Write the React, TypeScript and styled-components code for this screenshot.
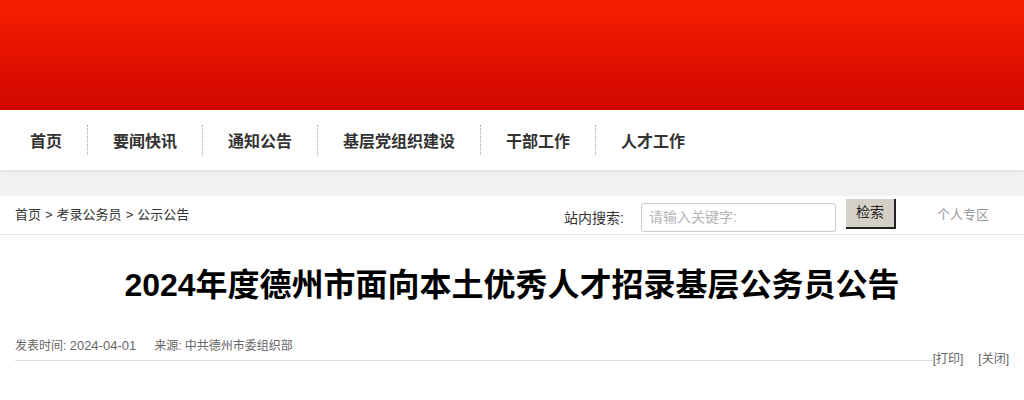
import React from 'react';
import styled, { createGlobalStyle } from 'styled-components';

const GlobalStyle = createGlobalStyle`
  body {
    margin: 0;
    background: #fff;
    font-family: "Liberation Sans", "Noto Sans CJK SC", sans-serif;
    color: #333;
  }
`;

const Banner = styled.div`
  height: 110px;
  background: linear-gradient(180deg, #f71f00 0%, #e51200 50%, #d00700 100%);
`;

const NavBar = styled.nav`
  height: 60px;
  background: #fff;
  display: flex;
  align-items: center;
  padding-left: 5px;
  box-shadow: 0 2px 4px rgba(0, 0, 0, 0.08);
  position: relative;
`;

const NavItem = styled.a<{ $last?: boolean }>`
  display: flex;
  align-items: center;
  height: 30px;
  padding: 0 25px;
  font-size: 16px;
  font-weight: bold;
  color: #333;
  text-decoration: none;
  border-right: ${(p) => (p.$last ? 'none' : '1px dotted #aaa')};
`;

const GrayBand = styled.div`
  height: 26px;
  background: #f2f2f2;
`;

const CrumbRow = styled.div`
  height: 38px;
  display: flex;
  align-items: center;
  padding: 0 15px;
  border-bottom: 1px solid #e8e8e8;
`;

const Crumbs = styled.div`
  font-size: 13px;
  color: #333;
  flex: 1;
  margin-top: -4px;
`;

const Sep = styled.span`
  padding: 0 4px;
`;

const SearchLabel = styled.span`
  font-size: 14px;
  color: #333;
  margin-right: 17px;
  margin-top: 4px;
`;

const SearchInput = styled.input`
  width: 195px;
  height: 29px;
  box-sizing: border-box;
  border: 1px solid #ccc;
  border-radius: 3px;
  padding: 0 7px;
  font-size: 14px;
  font-family: inherit;
  margin-top: 4px;
  &::placeholder {
    color: #b5b5b5;
  }
`;

const SearchButton = styled.button`
  width: 50px;
  height: 30px;
  margin-left: 10px;
  margin-top: -2px;
  background: #d4d0c8;
  border: none;
  border-right: 2px solid #222;
  border-bottom: 2px solid #222;
  font-size: 14px;
  font-family: inherit;
  color: #222;
  padding: 0 0 4px;
`;

const Personal = styled.a`
  font-size: 13px;
  color: #999;
  margin-left: 41px;
  margin-right: 20px;
  margin-top: -3px;
`;

const Article = styled.div`
  padding: 0 15px 30px;
`;

const Title = styled.h1`
  margin: 30px 0 0;
  text-align: center;
  font-size: 32px;
  font-weight: bold;
  color: #000;
  line-height: 40px;
`;

const MetaRow = styled.div`
  display: flex;
  align-items: flex-end;
  margin-top: 31px;
`;

const Meta = styled.div`
  flex: 1;
  font-size: 12px;
  color: #666;
  padding-bottom: 7px;
  border-bottom: 1px solid #ddd;
  display: flex;
  align-items: baseline;
  gap: 18px;
`;

const Num = styled.span`
  font-size: 13px;
`;

const Tools = styled.div`
  font-size: 12px;
  color: #666;
  display: flex;
  gap: 15px;
  margin-bottom: -5px;
`;

const navItems = ['首页', '要闻快讯', '通知公告', '基层党组织建设', '干部工作', '人才工作'];
const crumbs = ['首页', '考录公务员', '公示公告'];

export default function App() {
  return (
    <>
      <GlobalStyle />
      <Banner />
      <NavBar>
        {navItems.map((n, i) => (
          <NavItem key={n} $last={i === navItems.length - 1}>
            {n}
          </NavItem>
        ))}
      </NavBar>
      <GrayBand />
      <CrumbRow>
        <Crumbs>
          {crumbs.map((c, i) => (
            <React.Fragment key={c}>
              {i > 0 && <Sep>&gt;</Sep>}
              {c}
            </React.Fragment>
          ))}
        </Crumbs>
        <SearchLabel>站内搜索:</SearchLabel>
        <SearchInput placeholder="请输入关键字:" />
        <SearchButton>检索</SearchButton>
        <Personal>个人专区</Personal>
      </CrumbRow>
      <Article>
        <Title>2024年度德州市面向本土优秀人才招录基层公务员公告</Title>
        <MetaRow>
          <Meta>
            <span>
              发表时间: <Num>2024-04-01</Num>
            </span>
            <span>来源: 中共德州市委组织部</span>
          </Meta>
          <Tools>
            <span>[打印]</span>
            <span>[关闭]</span>
          </Tools>
        </MetaRow>
      </Article>
    </>
  );
}
